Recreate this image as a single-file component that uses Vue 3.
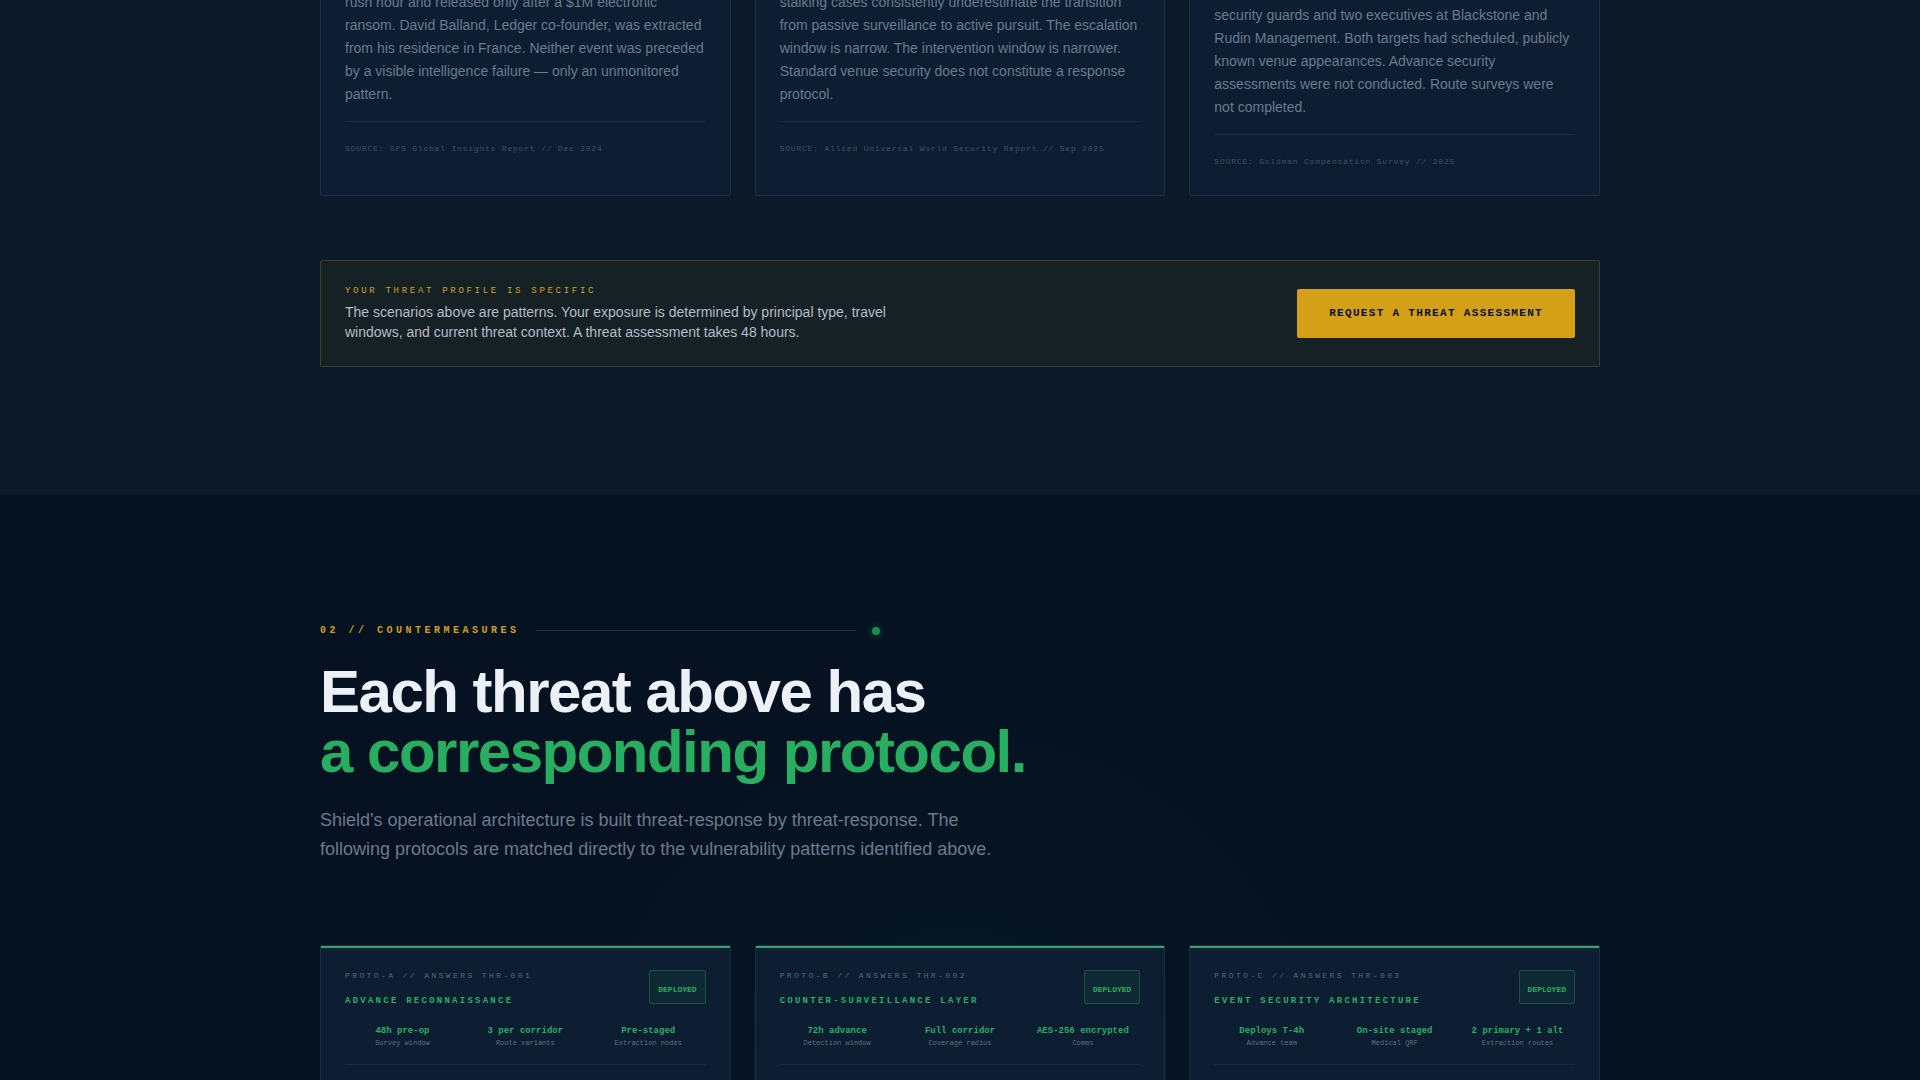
<script setup>
const threats = [
  {
    text: 'rush hour and released only after a $1M electronic ransom. David Balland, Ledger co-founder, was extracted from his residence in France. Neither event was preceded by a visible intelligence failure — only an unmonitored pattern.',
    source: 'SOURCE: GPS Global Insights Report // Dec 2024',
  },
  {
    text: 'stalking cases consistently underestimate the transition from passive surveillance to active pursuit. The escalation window is narrow. The intervention window is narrower. Standard venue security does not constitute a response protocol.',
    source: 'SOURCE: Allied Universal World Security Report // Sep 2025',
  },
  {
    text: 'security guards and two executives at Blackstone and Rudin Management. Both targets had scheduled, publicly known venue appearances. Advance security assessments were not conducted. Route surveys were not completed.',
    source: 'SOURCE: Goldman Compensation Survey // 2025',
    late: true,
  },
]

const protocols = [
  {
    code: 'PROTO-A // ANSWERS THR-001',
    title: 'ADVANCE RECONNAISSANCE',
    stats: [
      ['48h pre-op', 'Survey window'],
      ['3 per corridor', 'Route variants'],
      ['Pre-staged', 'Extraction nodes'],
    ],
  },
  {
    code: 'PROTO-B // ANSWERS THR-002',
    title: 'COUNTER-SURVEILLANCE LAYER',
    stats: [
      ['72h advance', 'Detection window'],
      ['Full corridor', 'Coverage radius'],
      ['AES-256 encrypted', 'Comms'],
    ],
  },
  {
    code: 'PROTO-C // ANSWERS THR-003',
    title: 'EVENT SECURITY ARCHITECTURE',
    stats: [
      ['Deploys T-4h', 'Advance team'],
      ['On-site staged', 'Medical QRF'],
      ['2 primary + 1 alt', 'Extraction routes'],
    ],
  },
]
</script>

<template>
  <main class="page">
    <section class="threats">
      <div class="container">
        <div class="grid">
          <article
            v-for="threat in threats"
            :key="threat.source"
            class="threat"
            :class="{ 'threat--late': threat.late }"
          >
            <p class="threat__text">{{ threat.text }}</p>
            <p class="threat__source">{{ threat.source }}</p>
          </article>
        </div>

        <aside class="cta">
          <div class="cta__copy">
            <p class="cta__label">YOUR THREAT PROFILE IS SPECIFIC</p>
            <p class="cta__text">
              The scenarios above are patterns. Your exposure is determined by principal type, travel
              windows, and current threat context. A threat assessment takes 48 hours.
            </p>
          </div>
          <button type="button" class="cta__button">REQUEST A THREAT ASSESSMENT</button>
        </aside>
      </div>
    </section>

    <section class="counter">
      <div class="glow" aria-hidden="true"></div>
      <div class="container">
        <header class="intro">
          <div class="eyebrow">
            <span class="eyebrow__text">02 // COUNTERMEASURES</span>
            <span class="eyebrow__line"></span>
            <span class="eyebrow__dot"></span>
          </div>
          <h2 class="heading">
            Each threat above has<br />
            <span class="heading__accent">a corresponding protocol.</span>
          </h2>
          <p class="lead">
            Shield's operational architecture is built threat-response by threat-response. The
            following protocols are matched directly to the vulnerability patterns identified above.
          </p>
        </header>

        <div class="grid">
          <article v-for="protocol in protocols" :key="protocol.code" class="protocol">
            <div class="protocol__head">
              <div>
                <p class="protocol__code">{{ protocol.code }}</p>
                <h3 class="protocol__title">{{ protocol.title }}</h3>
              </div>
              <span class="badge">DEPLOYED</span>
            </div>
            <dl class="stats">
              <div v-for="[value, name] in protocol.stats" :key="name" class="stat">
                <dt class="stat__name">{{ name }}</dt>
                <dd class="stat__value">{{ value }}</dd>
              </div>
            </dl>
          </article>
        </div>
      </div>
    </section>
  </main>
</template>

<style>
body {
  margin: 0;
  background: #061221;
}
</style>

<style scoped>
.page {
  height: 100vh;
  overflow: hidden;
  font-family: "Liberation Sans", Arial, sans-serif;
  color: #ecf0f7;
}

p,
h2,
h3,
dl,
dd {
  margin: 0;
}

.container {
  position: relative;
  max-width: 1280px;
  margin: 0 auto;
}

.grid {
  display: grid;
  grid-template-columns: repeat(3, minmax(0, 1fr));
  gap: 24px;
}

.threats {
  margin-top: -9px;
  padding-bottom: 128px;
  background: #0c1928;
}

.threat {
  padding: 0 24px 39px;
  border: 1px solid #1f2e40;
  border-top: 0;
  border-radius: 0 0 2px 2px;
  background: #0d1e33;
}

.threat--late {
  padding-top: 13px;
  padding-bottom: 26px;
}

.threat__text {
  padding-bottom: 15px;
  border-bottom: 1px solid #1a2b3f;
  font-size: 14px;
  line-height: 23px;
  color: #6b7a8d;
}

.threat__source {
  padding-top: 20px;
  font-family: "Liberation Mono", "Courier New", monospace;
  font-size: 8px;
  line-height: 14px;
  letter-spacing: 0.1em;
  color: #405064;
}

.cta {
  display: flex;
  align-items: center;
  justify-content: space-between;
  gap: 24px;
  margin-top: 64px;
  padding: 24px;
  border: 1px solid #453c22;
  border-radius: 2px;
  background: #162126;
}

.cta__copy {
  max-width: 576px;
}

.cta__label {
  margin-bottom: 4px;
  font-family: "Liberation Mono", "Courier New", monospace;
  font-size: 9px;
  line-height: 13px;
  letter-spacing: 0.3em;
  color: #d4a017;
}

.cta__text {
  font-size: 14px;
  line-height: 20px;
  color: #b4bcc8;
}

.cta__button {
  padding: 16px 32px;
  border: 0;
  border-radius: 2px;
  background: #d4a017;
  font-family: "Liberation Mono", "Courier New", monospace;
  font-size: 11px;
  font-weight: 700;
  line-height: 17px;
  letter-spacing: 0.12em;
  color: #061120;
  cursor: pointer;
}

.counter {
  position: relative;
  padding: 128px 0;
  background: #061221;
}

.glow {
  position: absolute;
  top: 200px;
  left: 50%;
  width: 800px;
  height: 800px;
  margin-left: -400px;
  background: radial-gradient(circle, rgba(39, 174, 96, 0.04), rgba(39, 174, 96, 0) 70%);
}

.eyebrow {
  display: flex;
  align-items: center;
  gap: 16px;
  max-width: 560px;
  margin-bottom: 24px;
}

.eyebrow__text {
  font-family: "Liberation Mono", "Courier New", monospace;
  font-size: 10px;
  font-weight: 700;
  line-height: 15px;
  letter-spacing: 0.35em;
  color: #d4a017;
}

.eyebrow__line {
  flex: 1;
  height: 1px;
  background: #1b2a3a;
}

.eyebrow__dot {
  width: 8px;
  height: 8px;
  border-radius: 50%;
  background: #1f8a50;
  box-shadow: 0 0 8px rgba(39, 174, 96, 0.5);
}

.heading {
  margin-bottom: 24px;
  font-size: 60px;
  font-weight: 700;
  line-height: 60px;
  letter-spacing: -0.025em;
}

.heading__accent {
  color: #27ae60;
}

.lead {
  max-width: 672px;
  margin-bottom: 81px;
  font-size: 18px;
  line-height: 29px;
  color: #6b7a8d;
}

.protocol {
  position: relative;
  padding: 24px;
  border: 1px solid #1b2f42;
  border-radius: 2px;
  background: #0d1e32;
  font-family: "Liberation Mono", "Courier New", monospace;
}

.protocol::before {
  content: "";
  position: absolute;
  top: 0;
  left: 0;
  right: 0;
  height: 2px;
  background: #2ba866;
}

.protocol__head {
  display: flex;
  align-items: flex-start;
  justify-content: space-between;
  margin-bottom: 16px;
}

.protocol__code {
  margin-bottom: 12px;
  font-size: 8px;
  line-height: 12px;
  letter-spacing: 0.3em;
  color: #566779;
}

.protocol__title {
  font-size: 9px;
  font-weight: 700;
  line-height: 14px;
  letter-spacing: 0.25em;
  color: #27ae60;
}

.badge {
  padding: 13px 8px 7px;
  border: 1px solid #17533f;
  border-radius: 2px;
  background: #0f2a35;
  font-size: 8px;
  font-weight: 700;
  line-height: 12px;
  color: #27ae60;
}

.stats {
  display: grid;
  grid-template-columns: repeat(3, minmax(0, 1fr));
  gap: 8px;
  padding-bottom: 15px;
  border-bottom: 1px solid #1a2c40;
}

.stat {
  display: flex;
  flex-direction: column-reverse;
  text-align: center;
}

.stat__value {
  font-size: 9px;
  font-weight: 700;
  line-height: 14px;
  color: #27ae60;
}

.stat__name {
  font-size: 7px;
  line-height: 11px;
  color: #5f6e81;
}
</style>
